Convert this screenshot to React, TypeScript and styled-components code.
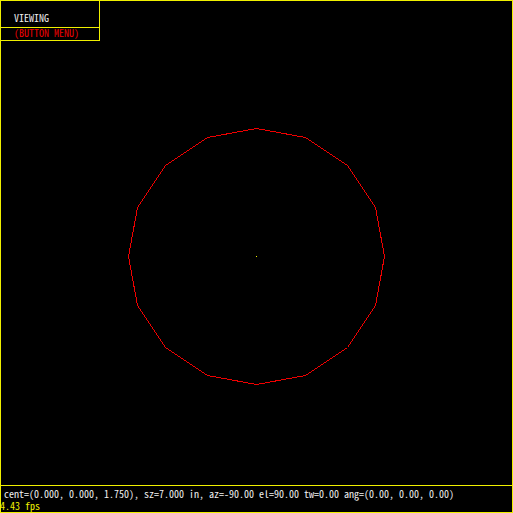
import React from "react";
import styled, { createGlobalStyle } from "styled-components";

const YELLOW = "#f0f000";
const RED = "#f00000";
const WHITE = "#f0f0f0";

const GlobalStyle = createGlobalStyle`
  *, *::before, *::after { box-sizing: border-box; }
  html, body { margin: 0; background: #000; }
`;

const Viewer = styled.main`
  position: relative;
  display: flex;
  flex-direction: column;
  justify-content: space-between;
  min-height: 100vh;
  background: #000;
  font-family: "Noto Sans Mono CJK JP", "Noto Sans Mono CJK SC", "Liberation Mono", monospace;
  font-size: 10px;
  line-height: 12px;
  overflow: hidden;
`;

const Frame = styled.div`
  position: absolute;
  inset: 0;
  border: 1px solid ${YELLOW};
  pointer-events: none;
`;

const Drawing = styled.svg`
  position: absolute;
  inset: 0;
  width: 100%;
  height: 100%;
`;

const Menu = styled.nav`
  position: relative;
  align-self: flex-start;
  width: 100px;
  border: 1px solid ${YELLOW};
`;

const MenuTitle = styled.div`
  padding: 11px 0 3px 13px;
  color: ${WHITE};
`;

const MenuButton = styled.button`
  display: block;
  width: 100%;
  padding: 0 0 2px 13px;
  border: 0;
  border-top: 1px solid ${YELLOW};
  background: transparent;
  color: ${RED};
  font: inherit;
  line-height: 10px;
  text-align: left;
  white-space: nowrap;
`;

const StatusBar = styled.footer`
  position: relative;
  border-top: 1px solid ${YELLOW};
  padding: 2px 0 1px;
`;

const StatusLine = styled.div<{ $color: string; $indent?: boolean }>`
  color: ${({ $color }) => $color};
  padding-left: ${({ $indent }) => ($indent ? "4px" : "0")};
  white-space: pre;
`;

const CENTER = 256.5;

// One quadrant of the sixteen-sided outline; the rest follows by quarter turns.
const QUADRANT = [
  [128, 0],
  [119, 49],
  [91, 91],
  [49, 119],
];

const outline = [0, 1, 2, 3]
  .flatMap((turn) =>
    QUADRANT.map(([x, y]) => {
      const [dx, dy] = [[x, y], [-y, x], [-x, -y], [y, -x]][turn];
      return `${CENTER + dx},${CENTER + dy}`;
    }),
  )
  .join(" ");

export default function App() {
  return (
    <Viewer>
      <GlobalStyle />
      <Drawing viewBox="0 0 513 513" shapeRendering="crispEdges" role="img" aria-label="Wireframe circle">
        <polygon points={outline} fill="none" stroke={RED} strokeWidth="1" />
        <rect x="256" y="256" width="1" height="1" fill={YELLOW} />
      </Drawing>
      <Frame />
      <Menu>
        <MenuTitle>VIEWING</MenuTitle>
        <MenuButton type="button">(BUTTON MENU)</MenuButton>
      </Menu>
      <StatusBar>
        <StatusLine $color={WHITE} $indent>
          cent=(0.000, 0.000, 1.750), sz=7.000 in, az=-90.00 el=90.00 tw=0.00 ang=(0.00, 0.00, 0.00)
        </StatusLine>
        <StatusLine $color={YELLOW}>4.43 fps</StatusLine>
      </StatusBar>
    </Viewer>
  );
}
